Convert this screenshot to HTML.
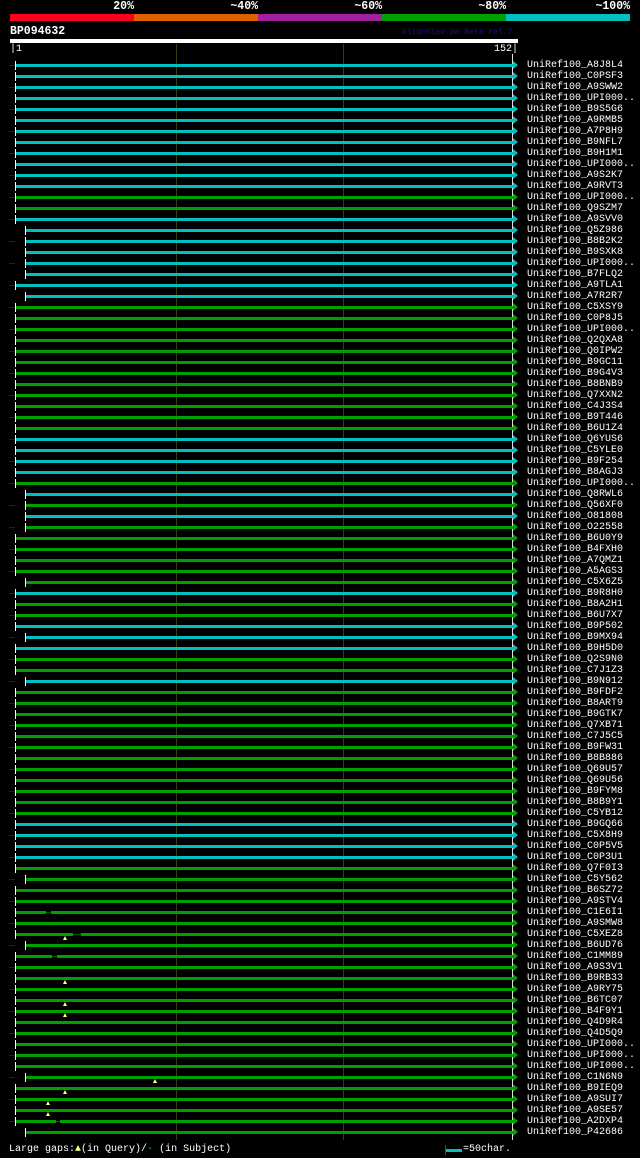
<!DOCTYPE html>
<html><head><meta charset="utf-8"><style>
*{margin:0;padding:0;box-sizing:content-box}
body{width:640px;height:1158px;background:#000;position:relative;overflow:hidden;font-family:"Liberation Mono",monospace;color:#fff}
.a{position:absolute}
.h{position:absolute;top:1px;font:bold 11.5px/12px "Liberation Mono",monospace;text-align:right;width:80px}
.v{position:absolute;top:44px;width:1px;height:1096px;background:#3a3a10}
#rows{position:absolute;left:0;top:0}
.r{position:absolute;left:0;width:640px;height:11px}
.r i{position:absolute;left:16px;top:4px;width:497px;height:3px;background:#00c0c0}
.r b{position:absolute;left:15px;top:1px;width:1px;height:9px;background:#fff}
.r u{position:absolute;left:513px;top:1px;width:0;height:0;border-left:5px solid #00c0c0;border-top:4px solid transparent;border-bottom:4px solid transparent}
.r s{position:absolute;left:527px;top:0;font:10px/11px "Liberation Mono",monospace;text-decoration:none;color:#fff;white-space:pre}
.s i{left:26px;width:487px}.s b{left:25px}
.g i{background:#00a000}.g u{border-left-color:#00a000}
.r:nth-child(odd)::before{content:"";position:absolute;left:9px;top:5px;width:6px;height:1px;background:#102050}
.r em{position:absolute;top:4px;height:3px;background:linear-gradient(#000 1px,#006000 1px,#006000 2px,#000 2px)}
.r q{position:absolute;top:7px;width:0;height:0;border-left:2px solid transparent;border-right:2px solid transparent;border-bottom:4px solid #ffff80}
.r q::before,.r q::after{content:none}
</style></head><body>
<div class="h" style="left:54px">20%</div>
<div class="h" style="left:178px">~40%</div>
<div class="h" style="left:302px">~60%</div>
<div class="h" style="left:426px">~80%</div>
<div class="h" style="left:550px">~100%</div>
<div class="a" style="left:10px;top:14px;width:124px;height:7px;background:#ff0020"></div>
<div class="a" style="left:134px;top:14px;width:124px;height:7px;background:#e06000"></div>
<div class="a" style="left:258px;top:14px;width:124px;height:7px;background:#a020a0"></div>
<div class="a" style="left:382px;top:14px;width:124px;height:7px;background:#00a000"></div>
<div class="a" style="left:506px;top:14px;width:124px;height:7px;background:#00c0c0"></div>
<div class="a" style="left:10px;top:26px;font:bold 11.5px/12px 'Liberation Mono',monospace">BP094632</div>
<div class="a" style="left:402px;top:28px;font:bold 8px/9px 'Liberation Mono',monospace;color:#101060">AlignView.pm Beta rel.7</div>
<div class="a" style="left:10px;top:39px;width:508px;height:4px;background:#fff"></div>
<div class="a" style="left:10px;top:44px;font:10px/11px 'Liberation Mono',monospace">|1</div>
<div class="a" style="left:460px;top:44px;width:58px;text-align:right;font:10px/11px 'Liberation Mono',monospace">152|</div>
<div class="v" style="left:176px"></div>
<div class="v" style="left:343px"></div>
<div class="a" style="left:512px;top:54px;width:1px;height:1086px;background:#ddd"></div>
<div id="rows">
<div class="r" style="top:60px"><b></b><i></i><u></u><s>UniRef100_A8J8L4</s></div>
<div class="r" style="top:71px"><b></b><i></i><u></u><s>UniRef100_C0PSF3</s></div>
<div class="r" style="top:82px"><b></b><i></i><u></u><s>UniRef100_A9SWW2</s></div>
<div class="r" style="top:93px"><b></b><i></i><u></u><s>UniRef100_UPI000..</s></div>
<div class="r" style="top:104px"><b></b><i></i><u></u><s>UniRef100_B9S5G6</s></div>
<div class="r" style="top:115px"><b></b><i></i><u></u><s>UniRef100_A9RMB5</s></div>
<div class="r" style="top:126px"><b></b><i></i><u></u><s>UniRef100_A7P8H9</s></div>
<div class="r" style="top:137px"><b></b><i></i><u></u><s>UniRef100_B9NFL7</s></div>
<div class="r" style="top:148px"><b></b><i></i><u></u><s>UniRef100_B9H1M1</s></div>
<div class="r" style="top:159px"><b></b><i></i><u></u><s>UniRef100_UPI000..</s></div>
<div class="r" style="top:170px"><b></b><i></i><u></u><s>UniRef100_A9S2K7</s></div>
<div class="r" style="top:181px"><b></b><i></i><u></u><s>UniRef100_A9RVT3</s></div>
<div class="r g" style="top:192px"><b></b><i></i><u></u><s>UniRef100_UPI000..</s></div>
<div class="r g" style="top:203px"><b></b><i></i><u></u><s>UniRef100_Q9SZM7</s></div>
<div class="r" style="top:214px"><b></b><i></i><u></u><s>UniRef100_A9SVV0</s></div>
<div class="r s" style="top:225px"><b></b><i></i><u></u><s>UniRef100_Q5Z986</s></div>
<div class="r s" style="top:236px"><b></b><i></i><u></u><s>UniRef100_B8B2K2</s></div>
<div class="r s" style="top:247px"><b></b><i></i><u></u><s>UniRef100_B9SXK8</s></div>
<div class="r s" style="top:258px"><b></b><i></i><u></u><s>UniRef100_UPI000..</s></div>
<div class="r s" style="top:269px"><b></b><i></i><u></u><s>UniRef100_B7FLQ2</s></div>
<div class="r" style="top:280px"><b></b><i></i><u></u><s>UniRef100_A9TLA1</s></div>
<div class="r s" style="top:291px"><b></b><i></i><u></u><s>UniRef100_A7R2R7</s></div>
<div class="r g" style="top:302px"><b></b><i></i><u></u><s>UniRef100_C5XSY9</s></div>
<div class="r g" style="top:313px"><b></b><i></i><u></u><s>UniRef100_C0P8J5</s></div>
<div class="r g" style="top:324px"><b></b><i></i><u></u><s>UniRef100_UPI000..</s></div>
<div class="r g" style="top:335px"><b></b><i></i><u></u><s>UniRef100_Q2QXA8</s></div>
<div class="r g" style="top:346px"><b></b><i></i><u></u><s>UniRef100_Q0IPW2</s></div>
<div class="r g" style="top:357px"><b></b><i></i><u></u><s>UniRef100_B9GC11</s></div>
<div class="r g" style="top:368px"><b></b><i></i><u></u><s>UniRef100_B9G4V3</s></div>
<div class="r g" style="top:379px"><b></b><i></i><u></u><s>UniRef100_B8BNB9</s></div>
<div class="r g" style="top:390px"><b></b><i></i><u></u><s>UniRef100_Q7XXN2</s></div>
<div class="r g" style="top:401px"><b></b><i></i><u></u><s>UniRef100_C4J3S4</s></div>
<div class="r g" style="top:412px"><b></b><i></i><u></u><s>UniRef100_B9T446</s></div>
<div class="r g" style="top:423px"><b></b><i></i><u></u><s>UniRef100_B6U1Z4</s></div>
<div class="r" style="top:434px"><b></b><i></i><u></u><s>UniRef100_Q6YUS6</s></div>
<div class="r" style="top:445px"><b></b><i></i><u></u><s>UniRef100_C5YLE0</s></div>
<div class="r" style="top:456px"><b></b><i></i><u></u><s>UniRef100_B9F254</s></div>
<div class="r" style="top:467px"><b></b><i></i><u></u><s>UniRef100_B8AGJ3</s></div>
<div class="r g" style="top:478px"><b></b><i></i><u></u><s>UniRef100_UPI000..</s></div>
<div class="r s" style="top:489px"><b></b><i></i><u></u><s>UniRef100_Q8RWL6</s></div>
<div class="r s g" style="top:500px"><b></b><i></i><u></u><s>UniRef100_Q56XF0</s></div>
<div class="r s" style="top:511px"><b></b><i></i><u></u><s>UniRef100_O81808</s></div>
<div class="r s g" style="top:522px"><b></b><i></i><u></u><s>UniRef100_O22558</s></div>
<div class="r g" style="top:533px"><b></b><i></i><u></u><s>UniRef100_B6U0Y9</s></div>
<div class="r g" style="top:544px"><b></b><i></i><u></u><s>UniRef100_B4FXH0</s></div>
<div class="r g" style="top:555px"><b></b><i></i><u></u><s>UniRef100_A7QMZ1</s></div>
<div class="r g" style="top:566px"><b></b><i></i><u></u><s>UniRef100_A5AGS3</s></div>
<div class="r s g" style="top:577px"><b></b><i></i><u></u><s>UniRef100_C5X6Z5</s></div>
<div class="r" style="top:588px"><b></b><i></i><u></u><s>UniRef100_B9R8H0</s></div>
<div class="r g" style="top:599px"><b></b><i></i><u></u><s>UniRef100_B8A2H1</s></div>
<div class="r g" style="top:610px"><b></b><i></i><u></u><s>UniRef100_B6U7X7</s></div>
<div class="r" style="top:621px"><b></b><i></i><u></u><s>UniRef100_B9P502</s></div>
<div class="r s" style="top:632px"><b></b><i></i><u></u><s>UniRef100_B9MX94</s></div>
<div class="r" style="top:643px"><b></b><i></i><u></u><s>UniRef100_B9H5D0</s></div>
<div class="r g" style="top:654px"><b></b><i></i><u></u><s>UniRef100_Q2S9N0</s></div>
<div class="r g" style="top:665px"><b></b><i></i><u></u><s>UniRef100_C7J1Z3</s></div>
<div class="r s" style="top:676px"><b></b><i></i><u></u><s>UniRef100_B9N912</s></div>
<div class="r g" style="top:687px"><b></b><i></i><u></u><s>UniRef100_B9FDF2</s></div>
<div class="r g" style="top:698px"><b></b><i></i><u></u><s>UniRef100_B8ART9</s></div>
<div class="r g" style="top:709px"><b></b><i></i><u></u><s>UniRef100_B9GTK7</s></div>
<div class="r g" style="top:720px"><b></b><i></i><u></u><s>UniRef100_Q7XB71</s></div>
<div class="r g" style="top:731px"><b></b><i></i><u></u><s>UniRef100_C7J5C5</s></div>
<div class="r g" style="top:742px"><b></b><i></i><u></u><s>UniRef100_B9FW31</s></div>
<div class="r g" style="top:753px"><b></b><i></i><u></u><s>UniRef100_B8B886</s></div>
<div class="r g" style="top:764px"><b></b><i></i><u></u><s>UniRef100_Q69U57</s></div>
<div class="r g" style="top:775px"><b></b><i></i><u></u><s>UniRef100_Q69U56</s></div>
<div class="r g" style="top:786px"><b></b><i></i><u></u><s>UniRef100_B9FYM8</s></div>
<div class="r g" style="top:797px"><b></b><i></i><u></u><s>UniRef100_B8B9Y1</s></div>
<div class="r g" style="top:808px"><b></b><i></i><u></u><s>UniRef100_C5YB12</s></div>
<div class="r" style="top:819px"><b></b><i></i><u></u><s>UniRef100_B9GQ66</s></div>
<div class="r" style="top:830px"><b></b><i></i><u></u><s>UniRef100_C5X8H9</s></div>
<div class="r" style="top:841px"><b></b><i></i><u></u><s>UniRef100_C0P5V5</s></div>
<div class="r" style="top:852px"><b></b><i></i><u></u><s>UniRef100_C0P3U1</s></div>
<div class="r g" style="top:863px"><b></b><i></i><u></u><s>UniRef100_Q7F0I3</s></div>
<div class="r s g" style="top:874px"><b></b><i></i><u></u><s>UniRef100_C5Y562</s></div>
<div class="r g" style="top:885px"><b></b><i></i><u></u><s>UniRef100_B6SZ72</s></div>
<div class="r g" style="top:896px"><b></b><i></i><u></u><s>UniRef100_A9STV4</s></div>
<div class="r g" style="top:907px"><b></b><i></i><em style="left:46px;width:5px"></em><u></u><s>UniRef100_C1E6I1</s></div>
<div class="r g" style="top:918px"><b></b><i></i><u></u><s>UniRef100_A9SMW8</s></div>
<div class="r g" style="top:929px"><b></b><i></i><em style="left:73px;width:8px"></em><q style="left:63px"></q><u></u><s>UniRef100_C5XEZ8</s></div>
<div class="r s g" style="top:940px"><b></b><i></i><u></u><s>UniRef100_B6UD76</s></div>
<div class="r g" style="top:951px"><b></b><i></i><em style="left:52px;width:5px"></em><u></u><s>UniRef100_C1MM89</s></div>
<div class="r g" style="top:962px"><b></b><i></i><u></u><s>UniRef100_A9S3V1</s></div>
<div class="r g" style="top:973px"><b></b><i></i><q style="left:63px"></q><u></u><s>UniRef100_B9RB33</s></div>
<div class="r g" style="top:984px"><b></b><i></i><u></u><s>UniRef100_A9RY75</s></div>
<div class="r g" style="top:995px"><b></b><i></i><q style="left:63px"></q><u></u><s>UniRef100_B6TC07</s></div>
<div class="r g" style="top:1006px"><b></b><i></i><q style="left:63px"></q><u></u><s>UniRef100_B4F9Y1</s></div>
<div class="r g" style="top:1017px"><b></b><i></i><u></u><s>UniRef100_Q4D9R4</s></div>
<div class="r g" style="top:1028px"><b></b><i></i><u></u><s>UniRef100_Q4D5Q9</s></div>
<div class="r g" style="top:1039px"><b></b><i></i><u></u><s>UniRef100_UPI000..</s></div>
<div class="r g" style="top:1050px"><b></b><i></i><u></u><s>UniRef100_UPI000..</s></div>
<div class="r g" style="top:1061px"><b></b><i></i><u></u><s>UniRef100_UPI000..</s></div>
<div class="r s g" style="top:1072px"><b></b><i></i><q style="left:153px"></q><u></u><s>UniRef100_C1N6N9</s></div>
<div class="r g" style="top:1083px"><b></b><i></i><q style="left:63px"></q><u></u><s>UniRef100_B9IEQ9</s></div>
<div class="r g" style="top:1094px"><b></b><i></i><q style="left:46px"></q><u></u><s>UniRef100_A9SUI7</s></div>
<div class="r g" style="top:1105px"><b></b><i></i><q style="left:46px"></q><u></u><s>UniRef100_A9SE57</s></div>
<div class="r g" style="top:1116px"><b></b><i></i><em style="left:56px;width:4px"></em><u></u><s>UniRef100_A2DXP4</s></div>
<div class="r s g" style="top:1127px"><b></b><i></i><u></u><s>UniRef100_P42686</s></div>
</div>
<div class="a" style="left:9px;top:1144px;font:10px/12px 'Liberation Mono',monospace;white-space:pre">Large gaps:<span style="color:#ffff80">▲</span>(in Query)/<span style="color:#00c0c0">-</span> (in Subject)</div>
<div class="a" style="left:445px;top:1149px;width:17px;height:3px;background:#00c0c0"></div>
<div class="a" style="left:445px;top:1145px;width:1px;height:10px;background:#444"></div>
<div class="a" style="left:463px;top:1144px;font:10px/12px 'Liberation Mono',monospace">=50char.</div>
</body></html>
